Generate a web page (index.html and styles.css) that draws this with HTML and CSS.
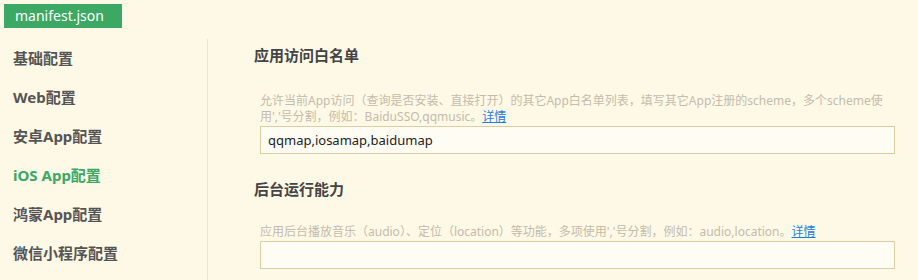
FILE: index.html
```html
<!DOCTYPE html>
<html lang="zh-CN">
<head>
    <meta charset="UTF-8">
    <title>manifest.json</title>
    <link rel="stylesheet" href="styles.css">
</head>
<body>

    <div class="tabs">
        <div class="tab active">manifest.json</div>
    </div>

    <div class="main">
        <ul class="menu">
            <li>基础配置</li>
            <li>Web配置</li>
            <li>安卓App配置</li>
            <li class="active">iOS App配置</li>
            <li>鸿蒙App配置</li>
            <li>微信小程序配置</li>
        </ul>

        <div class="content">
            <div class="section">
                <h3>应用访问白名单</h3>
                <p class="desc">允许当前App访问（查询是否安装、直接打开）的其它App白名单列表，填写其它App注册的scheme，多个scheme使用','号分割，例如：BaiduSSO,qqmusic。<a href="#">详情</a></p>
                <input type="text" class="field" value="qqmap,iosamap,baidumap">
            </div>
            <div class="section">
                <h3>后台运行能力</h3>
                <p class="desc">应用后台播放音乐（audio）、定位（location）等功能，多项使用','号分割，例如：audio,location。<a href="#">详情</a></p>
                <input type="text" class="field" value="">
            </div>
        </div>
    </div>

</body>
</html>
```

FILE: styles.css
```css
body {
    margin: 0;
    background-color: #fef8e7;
    font-family: "Noto Sans", "Noto Sans CJK SC", sans-serif;
    color: #333;
    height: 280px;
    overflow: hidden;
}
.tabs {
    display: flex;
    padding: 4px 4px 0 4px;
    height: 24px;
}
.tab {
    width: 118px;
    height: 24px;
    line-height: 24px;
    padding-left: 11px;
    box-sizing: border-box;
    background-color: #3ba864;
    color: #fff;
    font-size: 14px;
}
.main {
    display: flex;
    margin-top: 11px;
    height: 241px;
}
.menu {
    list-style: none;
    margin: 0;
    padding: 0;
    width: 207px;
    border-right: 1px solid #efe6cc;
}
.menu li {
    height: 39px;
    line-height: 39px;
    padding-left: 13px;
    font-size: 15px;
    font-weight: bold;
    color: #555;
}
.menu li.active {
    color: #3ba864;
}
.content {
    flex: 1;
    padding: 6px 23px 0 46px;
}
.section h3 {
    margin: 0;
    font-size: 15px;
    line-height: 20px;
    font-weight: bold;
    color: #444;
}
.desc {
    margin: 28px 0 1px 6px;
    font-size: 12px;
    line-height: 16px;
    color: #c4bcaa;
}
.desc a {
    color: #1c7fe0;
    text-decoration: underline;
}
.field {
    display: block;
    box-sizing: border-box;
    width: 635px;
    height: 28px;
    margin: 0 0 25px 6px;
    padding: 0 7px;
    border: 1px solid #dccea2;
    background-color: #fffcf3;
    font-family: "Noto Sans", "Noto Sans CJK SC", sans-serif;
    font-size: 13px;
    color: #222;
    outline: none;
}
.section + .section .desc {
    margin-top: 25px;
}
```
